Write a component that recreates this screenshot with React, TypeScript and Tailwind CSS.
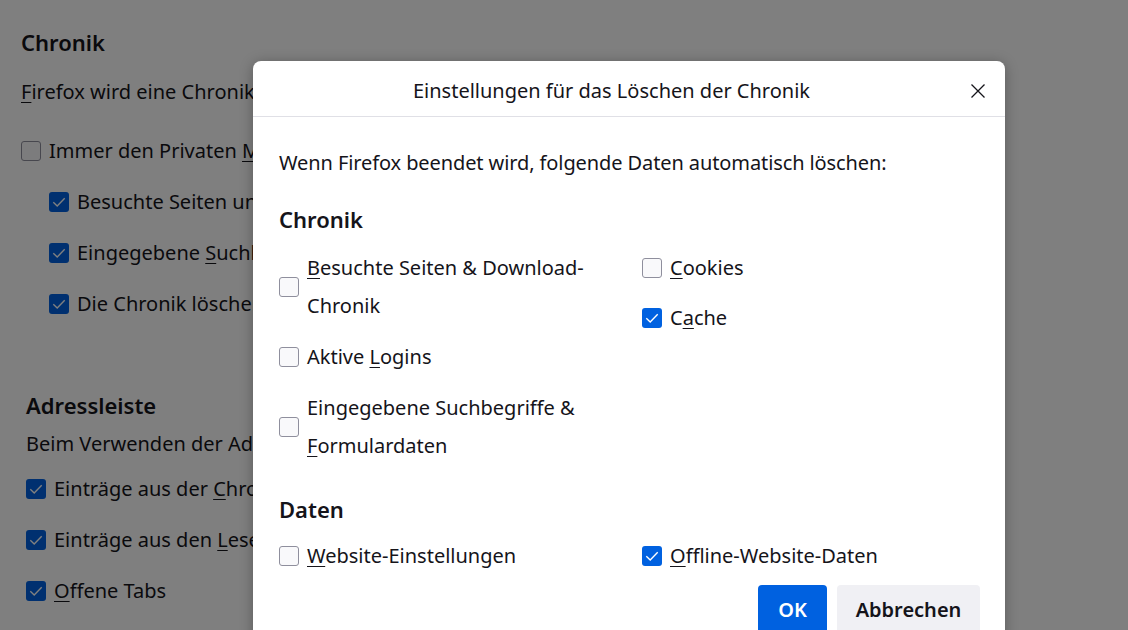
import React from 'react';

const font = { fontFamily: '"Noto Sans", "Open Sans", sans-serif' };

interface BoxProps {
  checked?: boolean;
}

// Firefox-style checkbox
const Box: React.FC<BoxProps> = ({ checked }) =>
  checked ? (
    <span className="flex h-5 w-5 shrink-0 items-center justify-center rounded-[3px] bg-[#0061e0]">
      <svg viewBox="0 0 16 16" className="h-4 w-4" fill="none" stroke="white" strokeWidth="1.4">
        <path d="M2.3 8.2 6.2 12 13.7 4.3" />
      </svg>
    </span>
  ) : (
    <span className="h-5 w-5 shrink-0 rounded-[3px] border border-[#8f8f9d] bg-[#f9f9fb]" />
  );

interface ItemProps {
  checked?: boolean;
  children: React.ReactNode;
}

const Item: React.FC<ItemProps> = ({ checked, children }) => (
  <label className="flex items-center gap-2">
    <Box checked={checked} />
    <span className="leading-[38px]">{children}</span>
  </label>
);

const K: React.FC<{ children: React.ReactNode }> = ({ children }) => (
  <u className="underline-offset-[3px] decoration-1">{children}</u>
);

const App: React.FC = () => {
  return (
    <div className="relative h-[630px] w-[1128px] overflow-hidden bg-white text-[20px] text-[#15141a]" style={font}>
      {/* Page behind the dialog */}
      <div className="pl-[21px] pt-[23px]">
        <h2 className="text-[22px] font-semibold leading-[38px]">Chronik</h2>
        <p className="mt-[12px] leading-[38px] whitespace-nowrap">
          <K>F</K>irefox wird eine Chronik nach benutzerdefinierten Einstellungen anlegen
        </p>
        <div className="mt-[21px] flex flex-col gap-[13px]">
          <Item>
            Immer den Privaten <K>M</K>odus verwenden
          </Item>
          <div className="flex flex-col gap-[13px] pl-[28px]">
            <Item checked>Besuchte Seiten und Download-Chronik speichern</Item>
            <Item checked>
              Eingegebene <K>S</K>uchbegriffe und Formulardaten speichern
            </Item>
            <Item checked>Die Chronik löschen, wenn Firefox geschlossen wird</Item>
          </div>
        </div>
      </div>
      <div className="mt-[63px] pl-[26px]">
        <h2 className="text-[22px] font-semibold leading-[38px]">Adressleiste</h2>
        <p className="mt-[1px] leading-[38px] whitespace-nowrap">
          Beim Verwenden der Adressleiste Folgendes vorschlagen
        </p>
        <div className="mt-[7px] flex flex-col gap-[13px]">
          <Item checked>
            Einträge aus der <K>C</K>hronik
          </Item>
          <Item checked>
            Einträge aus den <K>L</K>esezeichen
          </Item>
          <Item checked>
            <K>O</K>ffene Tabs
          </Item>
        </div>
      </div>

      {/* Modal overlay */}
      <div className="absolute inset-0 bg-black/50" />

      {/* Dialog */}
      <div className="absolute left-[253px] top-[61px] w-[752px] rounded-[8px] bg-white shadow-[0_2px_14px_rgba(0,0,0,0.3)]">
        <div className="flex h-[56px] items-center border-b border-[#e0e0e6] pt-[4px] pr-[19px]">
          <span className="flex-1 text-center leading-none">Einstellungen für das Löschen der Chronik</span>
          <svg viewBox="0 0 16 16" className="h-4 w-4" fill="none" stroke="#15141a" strokeWidth="1.3">
            <path d="M1.5 1.5 14.5 14.5 M14.5 1.5 1.5 14.5" />
          </svg>
        </div>

        <div className="pl-[26px] pr-[25px] pt-[27px] pb-[10px]">
          <p className="leading-[38px] tracking-[-0.1px]">
            Wenn Firefox beendet wird, folgende Daten automatisch löschen:
          </p>

          <h3 className="mt-[18px] text-[22px] font-semibold leading-[38px]">Chronik</h3>
          <div className="mt-[11px] grid grid-cols-[363px_1fr]">
            <div className="flex flex-col gap-[13px] pr-[40px]">
              <Item>
                <K>B</K>esuchte Seiten &amp; Download-Chronik
              </Item>
              <Item>
                Aktive <K>L</K>ogins
              </Item>
              <Item>
                Eingegebene Suchbegriffe &amp; <K>F</K>ormulardaten
              </Item>
            </div>
            <div className="flex flex-col gap-[12px]">
              <Item>
                <K>C</K>ookies
              </Item>
              <Item checked>
                C<K>a</K>che
              </Item>
            </div>
          </div>

          <h3 className="mt-[25px] text-[22px] font-semibold leading-[38px]">Daten</h3>
          <div className="mt-[9px] grid grid-cols-[363px_1fr]">
            <Item>
              <K>W</K>ebsite-Einstellungen
            </Item>
            <Item checked>
              <K>O</K>ffline-Website-Daten
            </Item>
          </div>

          <div className="mt-[10px] flex justify-end gap-[10px]">
            <button className="h-[50px] w-[69px] rounded-[4px] bg-[#0061e0] font-semibold text-white">OK</button>
            <button className="h-[50px] w-[143px] rounded-[4px] bg-[#f0f0f4] font-semibold text-[#15141a]">
              Abbrechen
            </button>
          </div>
        </div>
      </div>
    </div>
  );
};

export default App;
